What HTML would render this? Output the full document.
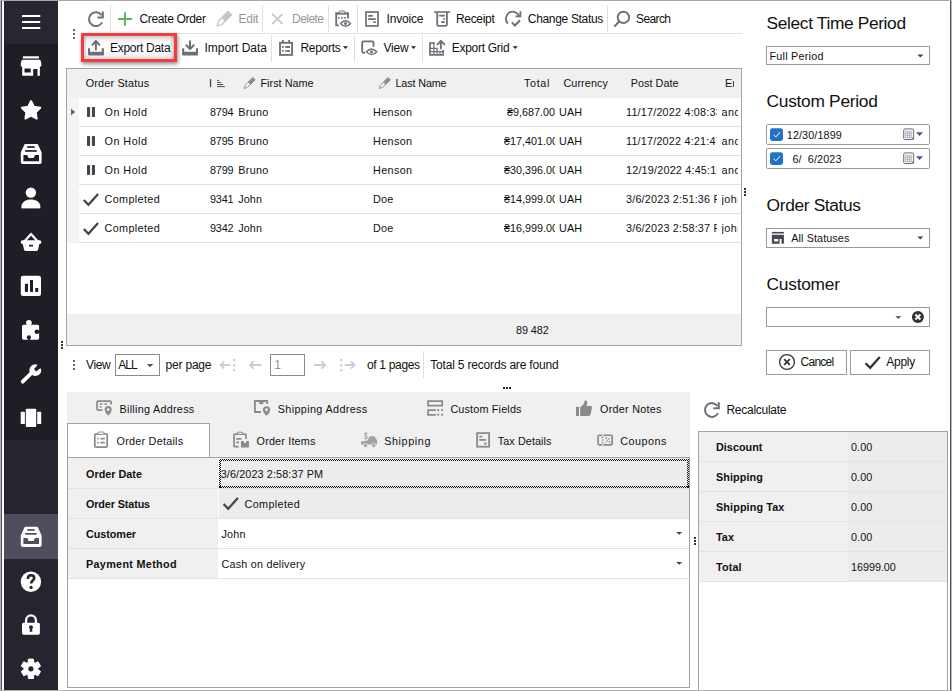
<!DOCTYPE html><html><head><meta charset="utf-8"><title>Orders</title><style>
html,body{margin:0;padding:0;background:#fff;}
#app{position:relative;width:952px;height:691px;overflow:hidden;background:#fff;font-family:"Liberation Sans", "DejaVu Sans", sans-serif;}
.b{position:absolute;box-sizing:border-box;}
.i{position:absolute;overflow:visible;}
.t{position:absolute;white-space:pre;line-height:1;font-size:12px;color:#111;}
.c{position:absolute;overflow:hidden;}

</style></head><body><div id="app">
<div class="b" style="left:0px;top:0px;width:952px;height:691px;background:#fff;"></div>
<div class="b" style="left:4px;top:1px;width:54px;height:689px;background:#1e1e26;"></div>
<div class="b" style="left:4px;top:1px;width:54px;height:43px;background:#272731;"></div>
<div class="b" style="left:4px;top:440px;width:54px;height:250px;background:#25252f;"></div>
<div class="b" style="left:4px;top:514px;width:54px;height:45px;background:#504d5e;"></div>
<div class="b" style="left:0px;top:0px;width:952px;height:1px;background:#a8a8a8;"></div>
<div class="b" style="left:0px;top:0px;width:1px;height:691px;background:#b4b4b4;"></div>
<div class="b" style="left:1px;top:1px;width:1px;height:689px;background:#4c4c5c;"></div>
<div class="b" style="left:950px;top:1px;width:1px;height:689px;background:#4c4c5c;"></div>
<div class="b" style="left:951px;top:0px;width:1px;height:691px;background:#b8b8b8;"></div>
<div class="b" style="left:0px;top:689.6px;width:952px;height:1.4px;background:#b0b0b0;"></div>
<div class="b" style="left:82px;top:33px;width:660px;height:1px;background:#e3e3e3;"></div>
<div class="b" style="left:110px;top:5px;width:1px;height:27px;background:#e0e0e0;"></div>
<div class="b" style="left:262px;top:5px;width:1px;height:27px;background:#e0e0e0;"></div>
<div class="b" style="left:328px;top:5px;width:1px;height:27px;background:#e0e0e0;"></div>
<div class="b" style="left:357px;top:5px;width:1px;height:27px;background:#e0e0e0;"></div>
<div class="b" style="left:607px;top:5px;width:1px;height:27px;background:#e0e0e0;"></div>
<div class="b" style="left:271px;top:35px;width:1px;height:27px;background:#e0e0e0;"></div>
<div class="b" style="left:354px;top:35px;width:1px;height:27px;background:#e0e0e0;"></div>
<div class="b" style="left:422px;top:35px;width:1px;height:27px;background:#e0e0e0;"></div>
<div class="b" style="left:84px;top:36px;width:90px;height:23px;background:linear-gradient(#c9c9c9 0%,#efefef 14%,#ffffff 35%,#ffffff 65%,#f2f2f2 85%,#dcdcdc 100%);"></div>
<div class="b" style="left:84px;top:36px;width:90px;height:23px;background:linear-gradient(to right,rgba(0,0,0,0.16),rgba(0,0,0,0) 4%,rgba(0,0,0,0) 95%,rgba(0,0,0,0.2));"></div>
<div class="b" style="left:81px;top:33px;width:96px;height:29px;border:3px solid #fa393f;box-shadow:1px 2px 4px rgba(0,0,0,0.45);"></div>
<div class="b" style="left:66px;top:68px;width:676px;height:278px;background:#fff;border:1px solid #a3a3a3;"></div>
<div class="b" style="left:67px;top:69px;width:674px;height:29px;background:#f0f0f0;"></div>
<div class="b" style="left:67px;top:98px;width:12px;height:145px;background:#f4f4f4;"></div>
<div class="b" style="left:79px;top:126px;width:662px;height:1px;background:#e2e2e2;"></div>
<div class="b" style="left:79px;top:155px;width:662px;height:1px;background:#e2e2e2;"></div>
<div class="b" style="left:79px;top:184px;width:662px;height:1px;background:#e2e2e2;"></div>
<div class="b" style="left:79px;top:213px;width:662px;height:1px;background:#e2e2e2;"></div>
<div class="b" style="left:79px;top:242px;width:662px;height:1px;background:#e2e2e2;"></div>
<div class="b" style="left:67px;top:314px;width:674px;height:31px;background:#f0f0f0;"></div>
<div class="b" style="left:115px;top:354px;width:45px;height:22px;background:#fff;border:1px solid #8a8a8a;"></div>
<div class="b" style="left:270px;top:354px;width:35px;height:22px;background:#fff;border:1px solid #8a8a8a;"></div>
<div class="b" style="left:423px;top:351px;width:1px;height:27px;background:#e0e0e0;"></div>
<div class="b" style="left:67px;top:392px;width:623px;height:65px;background:#f0f0f0;"></div>
<div class="b" style="left:67px;top:423px;width:143px;height:35px;background:#fff;border:1px solid #a3a3a3;border-bottom:none;"></div>
<div class="b" style="left:67px;top:457px;width:623px;height:231px;background:#fff;border:1px solid #a3a3a3;"></div>
<div class="b" style="left:68px;top:458px;width:150px;height:30px;background:#f0f0f0;"></div>
<div class="b" style="left:219px;top:458px;width:470px;height:30px;background:#ececec;"></div>
<div class="b" style="left:68px;top:488px;width:150px;height:30px;background:#f0f0f0;"></div>
<div class="b" style="left:219px;top:488px;width:470px;height:30px;background:#ececec;"></div>
<div class="b" style="left:68px;top:518px;width:150px;height:30px;background:#f0f0f0;"></div>
<div class="b" style="left:219px;top:518px;width:470px;height:30px;background:#fff;"></div>
<div class="b" style="left:68px;top:548px;width:150px;height:30px;background:#f0f0f0;"></div>
<div class="b" style="left:219px;top:548px;width:470px;height:30px;background:#fff;"></div>
<div class="b" style="left:68px;top:488px;width:621px;height:1px;background:#e3e3e3;"></div>
<div class="b" style="left:68px;top:518px;width:621px;height:1px;background:#e3e3e3;"></div>
<div class="b" style="left:68px;top:548px;width:621px;height:1px;background:#e3e3e3;"></div>
<div class="b" style="left:68px;top:578px;width:621px;height:1px;background:#e3e3e3;"></div>
<div class="b" style="left:219px;top:459px;width:470px;height:2px;background:repeating-conic-gradient(#111 0 25%,transparent 0 50%) 0 0/2px 2px;"></div>
<div class="b" style="left:219px;top:486px;width:470px;height:2px;background:repeating-conic-gradient(#111 0 25%,transparent 0 50%) 0 0/2px 2px;"></div>
<div class="b" style="left:219px;top:459px;width:2px;height:29px;background:repeating-conic-gradient(#111 0 25%,transparent 0 50%) 0 0/2px 2px;"></div>
<div class="b" style="left:687px;top:459px;width:2px;height:29px;background:repeating-conic-gradient(#111 0 25%,transparent 0 50%) 0 0/2px 2px;"></div>
<div class="b" style="left:698px;top:431px;width:250px;height:259px;background:#fff;border:1px solid #a3a3a3;border-bottom:none;"></div>
<div class="b" style="left:699px;top:432px;width:149px;height:30px;background:#f0f0f0;"></div>
<div class="b" style="left:848px;top:432px;width:99px;height:30px;background:#ececec;"></div>
<div class="b" style="left:699px;top:462px;width:149px;height:30px;background:#f0f0f0;"></div>
<div class="b" style="left:848px;top:462px;width:99px;height:30px;background:#ececec;"></div>
<div class="b" style="left:699px;top:492px;width:149px;height:30px;background:#f0f0f0;"></div>
<div class="b" style="left:848px;top:492px;width:99px;height:30px;background:#ececec;"></div>
<div class="b" style="left:699px;top:522px;width:149px;height:30px;background:#f0f0f0;"></div>
<div class="b" style="left:848px;top:522px;width:99px;height:30px;background:#ececec;"></div>
<div class="b" style="left:699px;top:552px;width:149px;height:30px;background:#f0f0f0;"></div>
<div class="b" style="left:848px;top:552px;width:99px;height:30px;background:#ececec;"></div>
<div class="b" style="left:699px;top:461px;width:248px;height:1px;background:#e3e3e3;"></div>
<div class="b" style="left:699px;top:491px;width:248px;height:1px;background:#e3e3e3;"></div>
<div class="b" style="left:699px;top:521px;width:248px;height:1px;background:#e3e3e3;"></div>
<div class="b" style="left:699px;top:551px;width:248px;height:1px;background:#e3e3e3;"></div>
<div class="b" style="left:699px;top:581px;width:248px;height:1px;background:#e3e3e3;"></div>
<div class="b" style="left:766px;top:46px;width:164px;height:19px;background:#fff;border:1px solid #999999;"></div>
<div class="b" style="left:766px;top:124px;width:164px;height:21px;background:#fff;border:1px solid #999999;border-radius:2px;"></div>
<div class="b" style="left:766px;top:148px;width:164px;height:21px;background:#fff;border:1px solid #999999;border-radius:2px;"></div>
<div class="b" style="left:766px;top:228px;width:164px;height:20px;background:#fff;border:1px solid #999999;"></div>
<div class="b" style="left:766px;top:307px;width:164px;height:20px;background:#fff;border:1px solid #999999;"></div>
<div class="b" style="left:766px;top:350px;width:81px;height:25px;background:#fff;border:1px solid #999999;"></div>
<div class="b" style="left:850px;top:350px;width:80px;height:25px;background:#fff;border:1px solid #999999;"></div>
<svg class="i" style="left:0;top:0" width="952" height="691" viewBox="0 0 952 691"><rect x="22" y="15" width="18.3" height="2.1" fill="#fff" rx="0.6" /><rect x="22" y="21" width="18.3" height="2.1" fill="#fff" rx="0.6" /><rect x="22" y="27" width="18.3" height="2.1" fill="#fff" rx="0.6" /><rect x="22.9" y="56.2" width="16.1" height="2.3" fill="#fff" rx="0.5" /><path d="M22.6,59.8 H39.5 Q40.4,59.8 40.7,60.7 L41.3,63.6 V65.2 Q41.3,66.7 39.8,66.7 H22.3 Q20.8,66.7 20.8,65.2 V63.6 L21.4,60.7 Q21.7,59.8 22.6,59.8 Z" fill="#fff" /><path d="M22.2,66 H39.9 V75.8 H37.4 V69 H33.2 V75.8 H22.2 Z M24.5,68.5 V72.6 H30.7 V68.5 Z" fill="#fff" fill-rule="evenodd"/><path d="M31.05,101.00 L33.93,106.74 L40.28,107.70 L35.71,112.21 L36.75,118.55 L31.05,115.60 L25.35,118.55 L26.39,112.21 L21.82,107.70 L28.17,106.74 Z" fill="#fff" stroke="#fff" stroke-width="1.9" stroke-linejoin="round" stroke-linecap="round"/><path d="M25.1,144.5 H37.3 L41,152.5 V162.20000000000002 Q41,163.4 39.8,163.4 H22.6 Q21.4,163.4 21.4,162.20000000000002 V152.5 Z" fill="#fff" stroke="#fff" stroke-width="1.2" stroke-linejoin="round" stroke-linecap="round"/><rect x="27.2" y="146.20000000000002" width="7.5" height="1.7" fill="#1e1e26" /><rect x="25.1" y="150.1" width="11.6" height="1.7" fill="#1e1e26" /><path d="M23.4,155.1 H27.2 L28.5,158.0 H33.7 L35,155.1 H39 V161.20000000000002 H23.4 Z" fill="#1e1e26" /><path d="M25.1,527.4 H37.3 L41,535.4 V545.0999999999999 Q41,546.3 39.8,546.3 H22.6 Q21.4,546.3 21.4,545.0999999999999 V535.4 Z" fill="#fff" stroke="#fff" stroke-width="1.2" stroke-linejoin="round" stroke-linecap="round"/><rect x="27.2" y="529.0999999999999" width="7.5" height="1.7" fill="#504d5e" /><rect x="25.1" y="533.0" width="11.6" height="1.7" fill="#504d5e" /><path d="M23.4,538.0 H27.2 L28.5,540.9 H33.7 L35,538.0 H39 V544.0999999999999 H23.4 Z" fill="#504d5e" /><circle cx="30.9" cy="192.6" r="5.2" fill="#fff"/><path d="M21.7,207.9 V206.4 C21.7,202.4 25.7,199.8 30.9,199.8 S40.1,202.4 40.1,206.4 V207.9 Z" fill="#fff" stroke="#fff" stroke-width="0.5" stroke-linejoin="round" stroke-linecap="round"/><path d="M24.6,241.2 L31.05,233.9 L37.5,241.2" fill="none" stroke="#fff" stroke-width="2.2" stroke-linejoin="round" stroke-linecap="round"/><rect x="20.8" y="240.3" width="20.5" height="3.6" fill="#fff" rx="1.6" /><path d="M22.6,243 H39.5 L38.1,249.6 Q37.8,250.9 36.5,250.9 H25.6 Q24.3,250.9 24,249.6 Z" fill="#fff" /><rect x="29" y="244.8" width="4.1" height="1.7" fill="#1e1e26" /><rect x="20.8" y="275.7" width="20.2" height="20.3" fill="#fff" rx="2.2" /><rect x="24.9" y="283.8" width="3.1" height="8.1" fill="#1e1e26" /><rect x="30" y="280" width="3" height="11.9" fill="#1e1e26" /><rect x="35.3" y="288" width="2.9" height="3.9" fill="#1e1e26" /><rect x="22" y="324.7" width="17.1" height="15" fill="#fff" rx="1.6" /><circle cx="28.9" cy="322.8" r="2.9" fill="#fff"/><circle cx="36.9" cy="331.7" r="2.3" fill="#1e1e26"/><rect x="37.5" y="330.5" width="2" height="2.4" fill="#1e1e26" /><circle cx="28.9" cy="337.3" r="2.05" fill="#1e1e26"/><rect x="27.8" y="338" width="2.2" height="2.2" fill="#1e1e26" /><path d="M22.7,381.7 L32.5,372" fill="none" stroke="#fff" stroke-width="3.8" stroke-linejoin="round" stroke-linecap="round"/><circle cx="35.3" cy="370.2" r="5.9" fill="#fff"/><path d="M35.6,369.8 L38,363 L44,367.5 Z" fill="#1e1e26" /><path d="M35.2,370.3 L39.8,365.7" fill="none" stroke="#1e1e26" stroke-width="3.6" /><rect x="25.8" y="408.7" width="10.4" height="18.2" fill="#fff" rx="1" /><rect x="20.7" y="411.8" width="4.2" height="12.1" fill="#fff" rx="0.6" /><rect x="37.2" y="411.8" width="4.0" height="12.1" fill="#fff" rx="0.6" /><circle cx="30.9" cy="581.7" r="10.2" fill="#fff"/><path d="M27.9,578.9 C27.9,576.4 29.3,575.2 31,575.2 C32.9,575.2 34.2,576.4 34.2,578.1 C34.2,580.6 31.1,580.6 31.1,583.6" fill="none" stroke="#25252f" stroke-width="2.6" /><circle cx="31.1" cy="587.4" r="1.6" fill="#25252f"/><rect x="22" y="622.8" width="17.9" height="11.9" fill="#fff" rx="1.6" /><path d="M26.1,623 V620.2 A4.9,4.9 0 0 1 35.9,620.2 V623" fill="none" stroke="#fff" stroke-width="2.3" /><circle cx="31" cy="627.2" r="2.0" fill="#25252f"/><path d="M30,627.5 H32 L32.4,631.8 H29.6 Z" fill="#25252f" /><path d="M28.14,662.37 L28.38,659.12 L33.42,659.12 L33.66,662.37 L35.09,663.19 L38.02,661.78 L40.54,666.15 L37.85,667.97 L37.85,669.63 L40.54,671.45 L38.02,675.82 L35.09,674.41 L33.66,675.23 L33.42,678.48 L28.38,678.48 L28.14,675.23 L26.71,674.41 L23.78,675.82 L21.26,671.45 L23.95,669.63 L23.95,667.97 L21.26,666.15 L23.78,661.78 L26.71,663.19 Z" fill="#fff" stroke="#fff" stroke-width="1.0" stroke-linejoin="round" stroke-linecap="round"/><circle cx="30.9" cy="668.8" r="2.6" fill="#25252f"/><path d="M102.05,22.33 A6.9,6.9 0 1 1 101.55,15.24" fill="none" stroke="#6f6f79" stroke-width="2.0" stroke-linecap="butt"/><path d="M102.80000000000001,11.399999999999999 V17.5 H97.4" fill="none" stroke="#6f6f79" stroke-width="2.0" /><path d="M124.9,12.2 V25.7 M118,18.9 H131.9" fill="none" stroke="#5bb55c" stroke-width="1.95" /><path d="M217.00,26.00 L221.55,24.70 L231.23,15.03 L227.97,11.77 L218.30,21.45 Z" fill="none" stroke="#c6c6c6" stroke-width="1.3" stroke-linejoin="round" stroke-linecap="round"/><path d="M225.56,20.70 L231.23,15.03 L227.97,11.77 L222.30,17.44 Z" fill="#c6c6c6" stroke="#c6c6c6" stroke-width="1.3" stroke-linejoin="round" stroke-linecap="round"/><path d="M272.2,13.8 L282.6,24.2 M282.6,13.8 L272.2,24.2" fill="none" stroke="#c6c6c6" stroke-width="1.75" /><path d="M348,18.6 V13.4 H336.2 V25.4 H338.8" fill="none" stroke="#6f6f79" stroke-width="1.85" /><rect x="335.5" y="12.6" width="13.2" height="1.9" fill="#6f6f79" /><rect x="339.4" y="11.0" width="5.4" height="2.2" fill="#fff" rx="0.6" stroke="#6f6f79" stroke-width="1.0" /><rect x="338.0" y="17.0" width="1.6" height="1.6" fill="#6f6f79" /><rect x="341.1" y="17.0" width="1.6" height="1.6" fill="#6f6f79" /><rect x="344.2" y="17.0" width="1.6" height="1.6" fill="#6f6f79" /><path d="M340.6,23.5 Q345.5,17.9 350.5,23.5 Q345.5,29.1 340.6,23.5 Z" fill="#fff" stroke="#6f6f79" stroke-width="1.5" stroke-linejoin="round" stroke-linecap="round"/><circle cx="345.5" cy="23.5" r="1.5" fill="#6f6f79"/><rect x="366" y="12" width="12" height="13.9" fill="none" stroke="#6f6f79" stroke-width="1.7" /><path d="M368.1,15.8 H372.8 M368.1,19 H375.8 M373.3,22.1 H375.8" fill="none" stroke="#6f6f79" stroke-width="1.75" /><rect x="434" y="11.2" width="16" height="1.6" fill="#6f6f79" /><path d="M437.2,12.5 V24.4 Q437.2,25.8 438.6,25.8 H445.5 Q446.9,25.8 446.9,24.4 V12.5" fill="none" stroke="#6f6f79" stroke-width="1.85" /><path d="M439.1,15.7 H444.9 M443.3,18.8 H444.9 M441.1,22 H444.9" fill="none" stroke="#6f6f79" stroke-width="1.75" /><path d="M507.92,23.48 A6.9,6.9 0 1 1 519.20,16.02" fill="none" stroke="#6f6f79" stroke-width="1.85" /><path d="M520.4,11.2 V16.4 H515.4" fill="none" stroke="#6f6f79" stroke-width="1.85" /><path d="M511.8,22.4 L514.9,25.5 L520,20.2" fill="none" stroke="#6f6f79" stroke-width="2.05" /><circle cx="623.4" cy="17.4" r="5.7" fill="none" stroke="#6f6f79" stroke-width="1.95"/><path d="M619.3,21.6 L614.8,26" fill="none" stroke="#6f6f79" stroke-width="2.05" stroke-linecap="round"/><path d="M89.05,48.3 V54 H102.85 V48.3" fill="none" stroke="#6f6f79" stroke-width="2.1" /><rect x="88" y="51.7" width="15.9" height="3.8" fill="#6f6f79" rx="1.0" /><path d="M183.15,48.3 V54 H196.95 V48.3" fill="none" stroke="#6f6f79" stroke-width="2.1" /><rect x="182.1" y="51.7" width="15.9" height="3.8" fill="#6f6f79" rx="1.0" /><path d="M95.9,49.6 V41.2 M92.3,44.8 L95.9,41 L99.5,44.8" fill="none" stroke="#6f6f79" stroke-width="1.95" stroke-linejoin="round" stroke-linecap="round"/><path d="M190,41.2 V48.6 M186.3,45.2 L190,49 L193.7,45.2" fill="none" stroke="#6f6f79" stroke-width="1.95" stroke-linejoin="round" stroke-linecap="round"/><rect x="280" y="42.8" width="12.1" height="12.1" fill="none" stroke="#6f6f79" stroke-width="1.85" /><path d="M282.9,40.1 V42 M289.1,40.1 V42" fill="none" stroke="#6f6f79" stroke-width="1.85" /><path d="M282.1,47 H283.7 M285.3,47 H290 M282.1,50.9 H283.7 M285.3,50.9 H290" fill="none" stroke="#6f6f79" stroke-width="1.85" /><path d="M373.5,46.8 V42.6 Q373.5,41.4 372.3,41.4 H363.4 Q362.2,41.4 362.2,42.6 V51.5 Q362.2,52.7 363.4,52.7 H365" fill="none" stroke="#6f6f79" stroke-width="1.85" /><path d="M366.3,51.7 Q371.5,46.2 376.8,51.7 Q371.5,57.2 366.3,51.7 Z" fill="#fff" stroke="#6f6f79" stroke-width="1.5" stroke-linejoin="round" stroke-linecap="round"/><circle cx="371.5" cy="51.7" r="1.5" fill="#6f6f79"/><path d="M430,42.3 V54.9 H443.1 V50" fill="none" stroke="#6f6f79" stroke-width="1.7" /><path d="M430,43.1 H434.7" fill="none" stroke="#6f6f79" stroke-width="1.6" /><path d="M433.9,42.3 V55 M429.5,48.4 H437.6 M437,48.4 V55 M429.5,51.6 H443.5 M440,51.6 V55" fill="none" stroke="#6f6f79" stroke-width="1.2" /><path d="M440.9,48.5 V41.2 M437.4,44.4 L440.9,40.8 L444.4,44.4" fill="none" stroke="#6f6f79" stroke-width="1.9" stroke-linejoin="round" stroke-linecap="round"/><path d="M343,46.2 H348 L345.5,49 Z" fill="#222" /><path d="M411,46.2 H416 L413.5,49 Z" fill="#222" /><path d="M512.8,46.2 H517.8 L515.3,49 Z" fill="#222" /><rect x="73" y="29" width="2" height="2" fill="#666" /><rect x="73" y="33" width="2" height="2" fill="#666" /><rect x="73" y="37" width="2" height="2" fill="#666" /><rect x="73" y="360" width="2" height="2" fill="#666" /><rect x="73" y="364" width="2" height="2" fill="#666" /><rect x="73" y="368" width="2" height="2" fill="#666" /><rect x="744" y="188" width="2" height="2" fill="#333" /><rect x="744" y="191" width="2" height="2" fill="#333" /><rect x="744" y="194" width="2" height="2" fill="#333" /><rect x="61" y="341" width="2" height="2" fill="#333" /><rect x="61" y="344" width="2" height="2" fill="#333" /><rect x="61" y="347" width="2" height="2" fill="#333" /><rect x="694" y="537" width="2" height="2" fill="#333" /><rect x="694" y="540" width="2" height="2" fill="#333" /><rect x="694" y="543" width="2" height="2" fill="#333" /><rect x="503" y="387" width="2" height="2" fill="#2a2a2a" /><rect x="506" y="387" width="2" height="2" fill="#2a2a2a" /><rect x="509" y="387" width="2" height="2" fill="#2a2a2a" /><path d="M217.1,80.4 H219 M217.1,82.4 H221 M217.1,84.5 H223 M217.1,86.6 H224.9" fill="none" stroke="#333" stroke-width="0.9" /><path d="M244.40,88.30 L247.57,87.39 L255.03,79.93 L252.77,77.67 L245.31,85.13 Z" fill="none" stroke="#8c8c8c" stroke-width="0.9" stroke-linejoin="round" stroke-linecap="round"/><path d="M250.76,84.21 L255.03,79.93 L252.77,77.67 L248.49,81.94 Z" fill="#8c8c8c" stroke="#8c8c8c" stroke-width="0.9" stroke-linejoin="round" stroke-linecap="round"/><path d="M379.60,88.30 L382.77,87.39 L390.23,79.93 L387.97,77.67 L380.51,85.13 Z" fill="none" stroke="#8c8c8c" stroke-width="0.9" stroke-linejoin="round" stroke-linecap="round"/><path d="M385.96,84.21 L390.23,79.93 L387.97,77.67 L383.69,81.94 Z" fill="#8c8c8c" stroke="#8c8c8c" stroke-width="0.9" stroke-linejoin="round" stroke-linecap="round"/><path d="M71,108.4 L75.1,112 L71,115.6 Z" fill="#666" /><rect x="87" y="107.1" width="3.1" height="9.8" fill="#45454f" rx="0.7" /><rect x="91.9" y="107.1" width="3.1" height="9.8" fill="#45454f" rx="0.7" /><rect x="87" y="136.1" width="3.1" height="9.8" fill="#45454f" rx="0.7" /><rect x="91.9" y="136.1" width="3.1" height="9.8" fill="#45454f" rx="0.7" /><rect x="87" y="165.1" width="3.1" height="9.8" fill="#45454f" rx="0.7" /><rect x="91.9" y="165.1" width="3.1" height="9.8" fill="#45454f" rx="0.7" /><path d="M83.8,200 l4.6,4.7 l9.7,-10.7" fill="none" stroke="#45454f" stroke-width="2.3" /><path d="M83.8,229 l4.6,4.7 l9.7,-10.7" fill="none" stroke="#45454f" stroke-width="2.3" /><path d="M223.6,504 l4.6,4.7 l9.7,-10.7" fill="none" stroke="#45454f" stroke-width="2.3" /><path d="M230.5,365 H220.6 M224.2,361.4 L220.6,365 L224.2,368.6" fill="none" stroke="#cdcdcd" stroke-width="1.9" /><rect x="233" y="359" width="2.2" height="2.2" fill="#cdcdcd" /><rect x="233" y="364" width="2.2" height="2.2" fill="#cdcdcd" /><rect x="233" y="369" width="2.2" height="2.2" fill="#cdcdcd" /><path d="M261.3,365 H250 M253.6,361.4 L250,365 L253.6,368.6" fill="none" stroke="#cdcdcd" stroke-width="1.9" /><path d="M314,365 H325 M321.4,361.4 L325,365 L321.4,368.6" fill="none" stroke="#cdcdcd" stroke-width="1.9" /><rect x="340.2" y="359" width="2.2" height="2.2" fill="#cdcdcd" /><rect x="340.2" y="364" width="2.2" height="2.2" fill="#cdcdcd" /><rect x="340.2" y="369" width="2.2" height="2.2" fill="#cdcdcd" /><path d="M344.8,365 H354.5 M350.9,361.4 L354.5,365 L350.9,368.6" fill="none" stroke="#cdcdcd" stroke-width="1.9" /><path d="M146.9,364 H153.3 L150.10000000000002,367.2 Z" fill="#555" /><path d="M111.2,404.6 V402.2 Q111.2,401 110,401 H98.2 Q97,401 97,402.2 V408.8 Q97,410 98.2,410 H102.4" fill="none" stroke="#8a8a8a" stroke-width="1.75" /><path d="M99.6,404 H102.6 M104.4,404 H107 M99.6,407 H101.6" fill="none" stroke="#8a8a8a" stroke-width="1.65" /><path d="M104.7,409.6 A3.5,3.5 0 1 1 111.7,409.6 Q111.7,412.75 108.2,415.6 Q104.7,412.75 104.7,409.6 Z" fill="#8a8a8a" /><circle cx="108.2" cy="409.6" r="1.4000000000000001" fill="#f0f0f0"/><path d="M267.2,404 V401 H254.9 V412 H261" fill="none" stroke="#8a8a8a" stroke-width="1.85" /><rect x="259.3" y="400.2" width="3.9" height="3.9" fill="#8a8a8a" /><path d="M262.9,409.8 A3.6,3.6 0 1 1 270.1,409.8 Q270.1,413.04 266.5,415.8 Q262.9,413.04 262.9,409.8 Z" fill="#8a8a8a" /><circle cx="266.5" cy="409.8" r="1.4400000000000002" fill="#f0f0f0"/><rect x="428.1" y="401.1" width="14.1" height="4.5" fill="none" stroke="#8a8a8a" stroke-width="1.75" /><path d="M435.9,410 H428.1 V414.8 H435.9" fill="none" stroke="#8a8a8a" stroke-width="1.75" /><rect x="437.3" y="409.2" width="1.9" height="1.9" fill="#8a8a8a" /><rect x="437.3" y="413.8" width="1.9" height="1.9" fill="#8a8a8a" /><rect x="441.2" y="409.2" width="1.9" height="1.9" fill="#8a8a8a" /><rect x="441.2" y="413.8" width="1.9" height="1.9" fill="#8a8a8a" /><rect x="576" y="406.8" width="3" height="9.2" fill="#8a8a8a" /><path d="M580.2,407.2 L583.4,404.6 L585,400.3 Q587.4,400.3 587.3,402.8 L586.6,406 H590.8 Q592.2,406.2 592,407.8 L590.6,414.6 Q590.2,416 588.8,416 H580.2 Z" fill="#8a8a8a" /><rect x="94.8" y="433.8" width="12.4" height="13.4" fill="none" rx="1.2" stroke="#8a8a8a" stroke-width="1.75" /><rect x="98.2" y="432" width="5.6" height="2.4" fill="#fff" rx="0.6" stroke="#8a8a8a" stroke-width="1.0" /><path d="M97.3,438.6 H98.9 M100.4,438.6 H104.8 M97.3,442.6 H98.9 M100.4,442.6 H104.8" fill="none" stroke="#8a8a8a" stroke-width="1.75" /><path d="M246,439 V435 Q246,434 245,434 H235 Q234,434 234,435 V445.7 Q234,446.7 235,446.7 H238.6" fill="none" stroke="#8a8a8a" stroke-width="1.75" /><rect x="237.3" y="432.2" width="5.4" height="2.2" fill="#f0f0f0" rx="0.6" stroke="#8a8a8a" stroke-width="1.0" /><path d="M236.3,438.8 H241.5 M236.3,442.3 H239" fill="none" stroke="#8a8a8a" stroke-width="1.75" /><path d="M241,441 H243.9 V443 H246 V441 H248.9 V447.5 H241 Z" fill="#8a8a8a" /><path d="M361,444.4 V441.5 L367.5,440.6 L369.6,436.2 H374.5 L377,440.2 V444.4 Z" fill="#a2a2a2" /><circle cx="365.5" cy="445.4" r="2.0" fill="#a2a2a2" stroke="#f0f0f0" stroke-width="0.7"/><circle cx="373.7" cy="445.4" r="2.0" fill="#a2a2a2" stroke="#f0f0f0" stroke-width="0.7"/><path d="M367.6,434 Q367.4,433 365.9,433 Q364.3,433 364.3,434.4 Q364.3,435.6 365.9,435.8 Q367.6,436 367.6,437.3 Q367.6,438.7 365.9,438.7 Q364.3,438.7 364.1,437.6 M365.9,432 V439.8" fill="none" stroke="#a2a2a2" stroke-width="0.9" /><rect x="477.1" y="433.1" width="12" height="13.6" fill="none" stroke="#8a8a8a" stroke-width="1.75" /><path d="M479.3,436.6 H482.3 M479.3,439.9 H486 M484,443.6 H486.6" fill="none" stroke="#8a8a8a" stroke-width="1.65" /><rect x="598.1" y="435.2" width="14.1" height="9.6" fill="none" rx="1" stroke="#8a8a8a" stroke-width="1.65" /><path d="M602.6,436.6 V443.4" fill="none" stroke="#8a8a8a" stroke-width="1.55" stroke-dasharray="1.4 1.3"/><rect x="602" y="434.4" width="1.4" height="1.6" fill="#f0f0f0" /><rect x="602" y="444" width="1.4" height="1.6" fill="#f0f0f0" /><path d="M605.6,442.4 L610,437.6" fill="none" stroke="#8a8a8a" stroke-width="1.0" /><circle cx="606.1" cy="438.2" r="0.9" fill="#8a8a8a"/><circle cx="609.6" cy="441.9" r="0.9" fill="#8a8a8a"/><path d="M676.2,532 H682.2 L679.2,534.8 Z" fill="#444" /><path d="M676.2,562 H682.2 L679.2,564.8 Z" fill="#444" /><path d="M718.05,413.13 A6.9,6.9 0 1 1 717.55,406.04" fill="none" stroke="#6f6f79" stroke-width="2.0" stroke-linecap="butt"/><path d="M718.8,402.20000000000005 V408.3 H713.4" fill="none" stroke="#6f6f79" stroke-width="2.0" /><path d="M917.3,54.6 H923.3 L920.3,57.4 Z" fill="#444" /><path d="M917.3,236.6 H923.3 L920.3,239.4 Z" fill="#444" /><path d="M895.3,316.2 H901.3 L898.3,318.8 Z" fill="#444" /><rect x="770" y="128.3" width="13" height="12.7" fill="#2271c9" rx="2.4" /><path d="M773.5,134.70000000000002 l2.3,2.3 l4.2,-4.9" fill="none" stroke="#fff" stroke-width="1.0" /><rect x="770" y="152.2" width="13" height="12.7" fill="#2271c9" rx="2.4" /><path d="M773.5,158.6 l2.3,2.3 l4.2,-4.9" fill="none" stroke="#fff" stroke-width="1.0" /><rect x="903.7" y="128.9" width="10" height="10.6" fill="#eef1f6" rx="1.4" stroke="#7d6e6c" stroke-width="1.0" /><rect x="905.4" y="131.20000000000002" width="6.4" height="6.8" fill="#aab2c0" /><rect x="906.0" y="131.9" width="1.1" height="1.2" fill="#f4f6fa" /><rect x="906.0" y="134.0" width="1.1" height="1.2" fill="#f4f6fa" /><rect x="906.0" y="136.1" width="1.1" height="1.2" fill="#f4f6fa" /><rect x="908.0" y="131.9" width="1.1" height="1.2" fill="#f4f6fa" /><rect x="908.0" y="134.0" width="1.1" height="1.2" fill="#f4f6fa" /><rect x="908.0" y="136.1" width="1.1" height="1.2" fill="#f4f6fa" /><rect x="910.0" y="131.9" width="1.1" height="1.2" fill="#f4f6fa" /><rect x="910.0" y="134.0" width="1.1" height="1.2" fill="#f4f6fa" /><rect x="910.0" y="136.1" width="1.1" height="1.2" fill="#f4f6fa" /><path d="M911.4,137.8 h2 v2 z" fill="#555" /><path d="M916,132.20000000000002 H923 L919.5,136.0 Z" fill="#3b5687" /><rect x="903.7" y="152.9" width="10" height="10.6" fill="#eef1f6" rx="1.4" stroke="#7d6e6c" stroke-width="1.0" /><rect x="905.4" y="155.20000000000002" width="6.4" height="6.8" fill="#aab2c0" /><rect x="906.0" y="155.9" width="1.1" height="1.2" fill="#f4f6fa" /><rect x="906.0" y="158.0" width="1.1" height="1.2" fill="#f4f6fa" /><rect x="906.0" y="160.1" width="1.1" height="1.2" fill="#f4f6fa" /><rect x="908.0" y="155.9" width="1.1" height="1.2" fill="#f4f6fa" /><rect x="908.0" y="158.0" width="1.1" height="1.2" fill="#f4f6fa" /><rect x="908.0" y="160.1" width="1.1" height="1.2" fill="#f4f6fa" /><rect x="910.0" y="155.9" width="1.1" height="1.2" fill="#f4f6fa" /><rect x="910.0" y="158.0" width="1.1" height="1.2" fill="#f4f6fa" /><rect x="910.0" y="160.1" width="1.1" height="1.2" fill="#f4f6fa" /><path d="M911.4,161.8 h2 v2 z" fill="#555" /><path d="M916,156.20000000000002 H923 L919.5,160.0 Z" fill="#3b5687" /><rect x="771.9" y="231.9" width="12" height="1.6" fill="#45454f" /><rect x="771.9" y="234.8" width="12" height="2.1" fill="#45454f" /><path d="M771.9,236.5 H783.9 V243.7 H781.5 V239 H779.6 V243.7 H771.9 Z M774,239 V241.5 H778.2 V239 Z" fill="#45454f" fill-rule="evenodd"/><circle cx="917.9" cy="317" r="6" fill="#333"/><path d="M915.4,314.5 L920.4,319.5 M920.4,314.5 L915.4,319.5" fill="none" stroke="#fff" stroke-width="1.9" /><circle cx="787" cy="362" r="7.4" fill="none" stroke="#333" stroke-width="1.3"/><path d="M784.2,359.2 L789.8,364.8 M789.8,359.2 L784.2,364.8" fill="none" stroke="#333" stroke-width="1.8" /><path d="M865.6,363.2 L870.2,367.8 L879.8,357" fill="none" stroke="#333" stroke-width="2.3" /></svg>
<span class="t" id="t0" style="left:139.4px;top:13.0px;letter-spacing:-0.319px;">Create Order</span>
<span class="t" id="t1" style="left:238.6px;top:13.0px;color:#96969e;letter-spacing:-0.322px;">Edit</span>
<span class="t" id="t2" style="left:292.0px;top:13.0px;color:#96969e;letter-spacing:-0.531px;">Delete</span>
<span class="t" id="t3" style="left:386.5px;top:13.0px;letter-spacing:-0.176px;">Invoice</span>
<span class="t" id="t4" style="left:456.0px;top:13.0px;letter-spacing:-0.327px;">Receipt</span>
<span class="t" id="t5" style="left:527.8px;top:13.0px;letter-spacing:-0.322px;">Change Status</span>
<span class="t" id="t6" style="left:636.0px;top:13.0px;letter-spacing:-0.605px;">Search</span>
<span class="t" id="t7" style="left:110.0px;top:42.0px;letter-spacing:-0.280px;">Export Data</span>
<span class="t" id="t8" style="left:204.5px;top:42.0px;letter-spacing:-0.018px;">Import Data</span>
<span class="t" id="t9" style="left:300.4px;top:42.0px;letter-spacing:-0.262px;">Reports</span>
<span class="t" id="t10" style="left:383.4px;top:42.0px;letter-spacing:-0.199px;">View</span>
<span class="t" id="t11" style="left:451.7px;top:42.0px;letter-spacing:-0.272px;">Export Grid</span>
<span class="t" id="t12" style="left:85.7px;top:78.0px;font-size:10.8px;letter-spacing:0.198px;">Order Status</span>
<span class="t" id="t13" style="left:209.0px;top:78.0px;font-size:10.8px;">I</span>
<span class="t" id="t14" style="left:260.4px;top:78.0px;font-size:10.8px;letter-spacing:0.050px;">First Name</span>
<span class="t" id="t15" style="left:395.5px;top:78.0px;font-size:10.8px;letter-spacing:-0.135px;">Last Name</span>
<span class="t" id="t16" style="left:524.0px;top:78.0px;font-size:10.8px;letter-spacing:0.637px;">Total</span>
<span class="t" id="t17" style="left:563.4px;top:78.0px;font-size:10.8px;letter-spacing:0.098px;">Currency</span>
<span class="t" id="t18" style="left:630.7px;top:78.0px;font-size:10.8px;letter-spacing:0.064px;">Post Date</span>
<div class="c" style="left:725.0px;top:76.0px;width:9.0px;height:15.8px;"><span class="t" id="t19" style="left:0;top:2px;font-size:10.8px;">Em</span></div>
<span class="t" id="t20" style="left:104.5px;top:107.0px;font-size:10.8px;letter-spacing:0.484px;">On Hold</span>
<span class="t" id="t21" style="left:210.0px;top:107.0px;font-size:10.8px;letter-spacing:-0.133px;">8794</span>
<span class="t" id="t22" style="left:238.3px;top:107.0px;font-size:10.8px;letter-spacing:0.277px;">Bruno</span>
<span class="t" id="t23" style="left:373.0px;top:107.0px;font-size:10.8px;letter-spacing:0.380px;">Henson</span>
<div class="c" style="left:507.0px;top:105.0px;width:48.0px;height:15.8px;"><span class="t" id="t24" style="left:0;top:2px;font-size:10.8px;">₴9,687.00</span></div>
<span class="t" id="t25" style="left:558.9px;top:107.0px;font-size:10.8px;letter-spacing:0.201px;">UAH</span>
<div class="c" style="left:626.0px;top:105.0px;width:91.0px;height:15.8px;"><span class="t" id="t26" style="left:0;top:2px;font-size:10.8px;letter-spacing:0.200px;">11/17/2022 4:08:33 PM</span></div>
<div class="c" style="left:721.5px;top:105.0px;width:16.3px;height:15.8px;"><span class="t" id="t27" style="left:0;top:2px;font-size:10.8px;letter-spacing:0.450px;">andrew</span></div>
<span class="t" id="t28" style="left:104.5px;top:136.0px;font-size:10.8px;letter-spacing:0.484px;">On Hold</span>
<span class="t" id="t29" style="left:210.0px;top:136.0px;font-size:10.8px;letter-spacing:-0.133px;">8795</span>
<span class="t" id="t30" style="left:238.3px;top:136.0px;font-size:10.8px;letter-spacing:0.277px;">Bruno</span>
<span class="t" id="t31" style="left:373.0px;top:136.0px;font-size:10.8px;letter-spacing:0.380px;">Henson</span>
<div class="c" style="left:504.0px;top:134.0px;width:51.0px;height:15.8px;"><span class="t" id="t32" style="left:0;top:2px;font-size:10.8px;">₴17,401.00</span></div>
<span class="t" id="t33" style="left:558.9px;top:136.0px;font-size:10.8px;letter-spacing:0.201px;">UAH</span>
<div class="c" style="left:626.0px;top:134.0px;width:91.0px;height:15.8px;"><span class="t" id="t34" style="left:0;top:2px;font-size:10.8px;letter-spacing:0.200px;">11/17/2022 4:21:47 PM</span></div>
<div class="c" style="left:721.5px;top:134.0px;width:16.3px;height:15.8px;"><span class="t" id="t35" style="left:0;top:2px;font-size:10.8px;letter-spacing:0.450px;">andrew</span></div>
<span class="t" id="t36" style="left:104.5px;top:165.0px;font-size:10.8px;letter-spacing:0.484px;">On Hold</span>
<span class="t" id="t37" style="left:210.0px;top:165.0px;font-size:10.8px;letter-spacing:-0.133px;">8799</span>
<span class="t" id="t38" style="left:238.3px;top:165.0px;font-size:10.8px;letter-spacing:0.277px;">Bruno</span>
<span class="t" id="t39" style="left:373.0px;top:165.0px;font-size:10.8px;letter-spacing:0.380px;">Henson</span>
<div class="c" style="left:504.0px;top:163.0px;width:51.0px;height:15.8px;"><span class="t" id="t40" style="left:0;top:2px;font-size:10.8px;">₴30,396.00</span></div>
<span class="t" id="t41" style="left:558.9px;top:165.0px;font-size:10.8px;letter-spacing:0.201px;">UAH</span>
<div class="c" style="left:626.0px;top:163.0px;width:91.0px;height:15.8px;"><span class="t" id="t42" style="left:0;top:2px;font-size:10.8px;letter-spacing:0.200px;">12/19/2022 4:45:10 PM</span></div>
<div class="c" style="left:721.5px;top:163.0px;width:16.3px;height:15.8px;"><span class="t" id="t43" style="left:0;top:2px;font-size:10.8px;letter-spacing:0.450px;">andrew</span></div>
<span class="t" id="t44" style="left:104.5px;top:194.0px;font-size:10.8px;letter-spacing:0.365px;">Completed</span>
<span class="t" id="t45" style="left:210.0px;top:194.0px;font-size:10.8px;letter-spacing:-0.133px;">9341</span>
<span class="t" id="t46" style="left:238.3px;top:194.0px;font-size:10.8px;letter-spacing:0.070px;">John</span>
<span class="t" id="t47" style="left:373.0px;top:194.0px;font-size:10.8px;letter-spacing:0.229px;">Doe</span>
<div class="c" style="left:504.0px;top:192.0px;width:51.0px;height:15.8px;"><span class="t" id="t48" style="left:0;top:2px;font-size:10.8px;">₴14,999.00</span></div>
<span class="t" id="t49" style="left:558.9px;top:194.0px;font-size:10.8px;letter-spacing:0.201px;">UAH</span>
<div class="c" style="left:626.0px;top:192.0px;width:91.0px;height:15.8px;"><span class="t" id="t50" style="left:0;top:2px;font-size:10.8px;letter-spacing:0.200px;">3/6/2023 2:51:36 PM</span></div>
<div class="c" style="left:721.5px;top:192.0px;width:16.3px;height:15.8px;"><span class="t" id="t51" style="left:0;top:2px;font-size:10.8px;letter-spacing:0.450px;">john</span></div>
<span class="t" id="t52" style="left:104.5px;top:223.0px;font-size:10.8px;letter-spacing:0.365px;">Completed</span>
<span class="t" id="t53" style="left:210.0px;top:223.0px;font-size:10.8px;letter-spacing:-0.133px;">9342</span>
<span class="t" id="t54" style="left:238.3px;top:223.0px;font-size:10.8px;letter-spacing:0.070px;">John</span>
<span class="t" id="t55" style="left:373.0px;top:223.0px;font-size:10.8px;letter-spacing:0.229px;">Doe</span>
<div class="c" style="left:504.0px;top:221.0px;width:51.0px;height:15.8px;"><span class="t" id="t56" style="left:0;top:2px;font-size:10.8px;">₴16,999.00</span></div>
<span class="t" id="t57" style="left:558.9px;top:223.0px;font-size:10.8px;letter-spacing:0.201px;">UAH</span>
<div class="c" style="left:626.0px;top:221.0px;width:91.0px;height:15.8px;"><span class="t" id="t58" style="left:0;top:2px;font-size:10.8px;letter-spacing:0.200px;">3/6/2023 2:58:37 PM</span></div>
<div class="c" style="left:721.5px;top:221.0px;width:16.3px;height:15.8px;"><span class="t" id="t59" style="left:0;top:2px;font-size:10.8px;letter-spacing:0.450px;">john</span></div>
<span class="t" id="t60" style="left:516.0px;top:325.0px;font-size:10.8px;letter-spacing:-0.072px;">89 482</span>
<span class="t" id="t61" style="left:86.0px;top:359.0px;letter-spacing:-0.349px;">View</span>
<span class="t" id="t62" style="left:118.3px;top:359.0px;letter-spacing:-1.020px;">ALL</span>
<span class="t" id="t63" style="left:165.6px;top:359.0px;letter-spacing:-0.209px;">per page</span>
<span class="t" id="t64" style="left:274.3px;top:359.0px;color:#9090a0;">1</span>
<span class="t" id="t65" style="left:366.9px;top:359.0px;letter-spacing:-0.315px;">of 1 pages</span>
<span class="t" id="t66" style="left:430.2px;top:359.0px;letter-spacing:-0.178px;">Total 5 records are found</span>
<span class="t" id="t67" style="left:119.5px;top:404.0px;font-size:10.8px;letter-spacing:0.278px;">Billing Address</span>
<span class="t" id="t68" style="left:277.8px;top:404.0px;font-size:10.8px;letter-spacing:0.360px;">Shipping Address</span>
<span class="t" id="t69" style="left:450.4px;top:404.0px;font-size:10.8px;letter-spacing:0.177px;">Custom Fields</span>
<span class="t" id="t70" style="left:600.0px;top:404.0px;font-size:10.8px;letter-spacing:0.272px;">Order Notes</span>
<span class="t" id="t71" style="left:116.5px;top:436.0px;font-size:10.8px;letter-spacing:0.253px;">Order Details</span>
<span class="t" id="t72" style="left:256.6px;top:436.0px;font-size:10.8px;letter-spacing:0.173px;">Order Items</span>
<span class="t" id="t73" style="left:384.2px;top:436.0px;font-size:10.8px;letter-spacing:0.596px;">Shipping</span>
<span class="t" id="t74" style="left:497.8px;top:436.0px;font-size:10.8px;letter-spacing:0.081px;">Tax Details</span>
<span class="t" id="t75" style="left:620.2px;top:436.0px;font-size:10.8px;letter-spacing:0.509px;">Coupons</span>
<span class="t" id="t76" style="left:86.0px;top:469.0px;font-size:10.8px;font-weight:bold;letter-spacing:0.019px;">Order Date</span>
<span class="t" id="t77" style="left:86.0px;top:499.0px;font-size:10.8px;font-weight:bold;letter-spacing:-0.117px;">Order Status</span>
<span class="t" id="t78" style="left:86.0px;top:529.0px;font-size:10.8px;font-weight:bold;letter-spacing:-0.051px;">Customer</span>
<span class="t" id="t79" style="left:86.0px;top:559.0px;font-size:10.8px;font-weight:bold;letter-spacing:0.315px;">Payment Method</span>
<span class="t" id="t80" style="left:220.7px;top:469.0px;font-size:10.8px;letter-spacing:0.118px;">3/6/2023 2:58:37 PM</span>
<span class="t" id="t81" style="left:244.6px;top:499.0px;font-size:10.8px;letter-spacing:0.353px;">Completed</span>
<span class="t" id="t82" style="left:221.4px;top:529.0px;font-size:10.8px;letter-spacing:0.220px;">John</span>
<span class="t" id="t83" style="left:221.4px;top:559.0px;font-size:10.8px;letter-spacing:0.224px;">Cash on delivery</span>
<span class="t" id="t84" style="left:726.4px;top:404.0px;letter-spacing:-0.255px;">Recalculate</span>
<span class="t" id="t85" style="left:716.0px;top:442.0px;font-size:10.8px;font-weight:bold;letter-spacing:0.027px;">Discount</span>
<span class="t" id="t86" style="left:851.0px;top:442.0px;font-size:10.8px;letter-spacing:0.071px;">0.00</span>
<span class="t" id="t87" style="left:716.0px;top:472.0px;font-size:10.8px;font-weight:bold;letter-spacing:0.102px;">Shipping</span>
<span class="t" id="t88" style="left:851.0px;top:472.0px;font-size:10.8px;letter-spacing:0.071px;">0.00</span>
<span class="t" id="t89" style="left:716.0px;top:502.0px;font-size:10.8px;font-weight:bold;letter-spacing:0.126px;">Shipping Tax</span>
<span class="t" id="t90" style="left:851.0px;top:502.0px;font-size:10.8px;letter-spacing:0.071px;">0.00</span>
<span class="t" id="t91" style="left:716.0px;top:532.0px;font-size:10.8px;font-weight:bold;letter-spacing:0.062px;">Tax</span>
<span class="t" id="t92" style="left:851.0px;top:532.0px;font-size:10.8px;letter-spacing:0.071px;">0.00</span>
<span class="t" id="t93" style="left:716.0px;top:562.0px;font-size:10.8px;font-weight:bold;letter-spacing:0.140px;">Total</span>
<span class="t" id="t94" style="left:851.0px;top:562.0px;font-size:10.8px;letter-spacing:-0.031px;">16999.00</span>
<span class="t" id="t95" style="left:766.6px;top:15.0px;font-size:17.33px;letter-spacing:-0.352px;">Select Time Period</span>
<span class="t" id="t96" style="left:769.5px;top:51.0px;font-size:10.8px;letter-spacing:0.236px;">Full Period</span>
<span class="t" id="t97" style="left:766.6px;top:93.0px;font-size:17.33px;letter-spacing:-0.285px;">Custom Period</span>
<span class="t" id="t98" style="left:786.8px;top:130.0px;font-size:10.8px;letter-spacing:0.105px;">12/30/1899</span>
<span class="t" id="t99" style="left:792.4px;top:154.0px;font-size:10.8px;letter-spacing:0.107px;">6/  6/2023</span>
<span class="t" id="t100" style="left:766.6px;top:197.0px;font-size:17.33px;letter-spacing:-0.345px;">Order Status</span>
<span class="t" id="t101" style="left:791.3px;top:233.0px;font-size:10.8px;letter-spacing:0.090px;">All Statuses</span>
<span class="t" id="t102" style="left:766.6px;top:276.0px;font-size:17.33px;letter-spacing:-0.251px;">Customer</span>
<span class="t" id="t103" style="left:800.6px;top:356.0px;letter-spacing:-0.760px;">Cancel</span>
<span class="t" id="t104" style="left:886.3px;top:356.0px;letter-spacing:-0.266px;">Apply</span>
</div></body></html>
